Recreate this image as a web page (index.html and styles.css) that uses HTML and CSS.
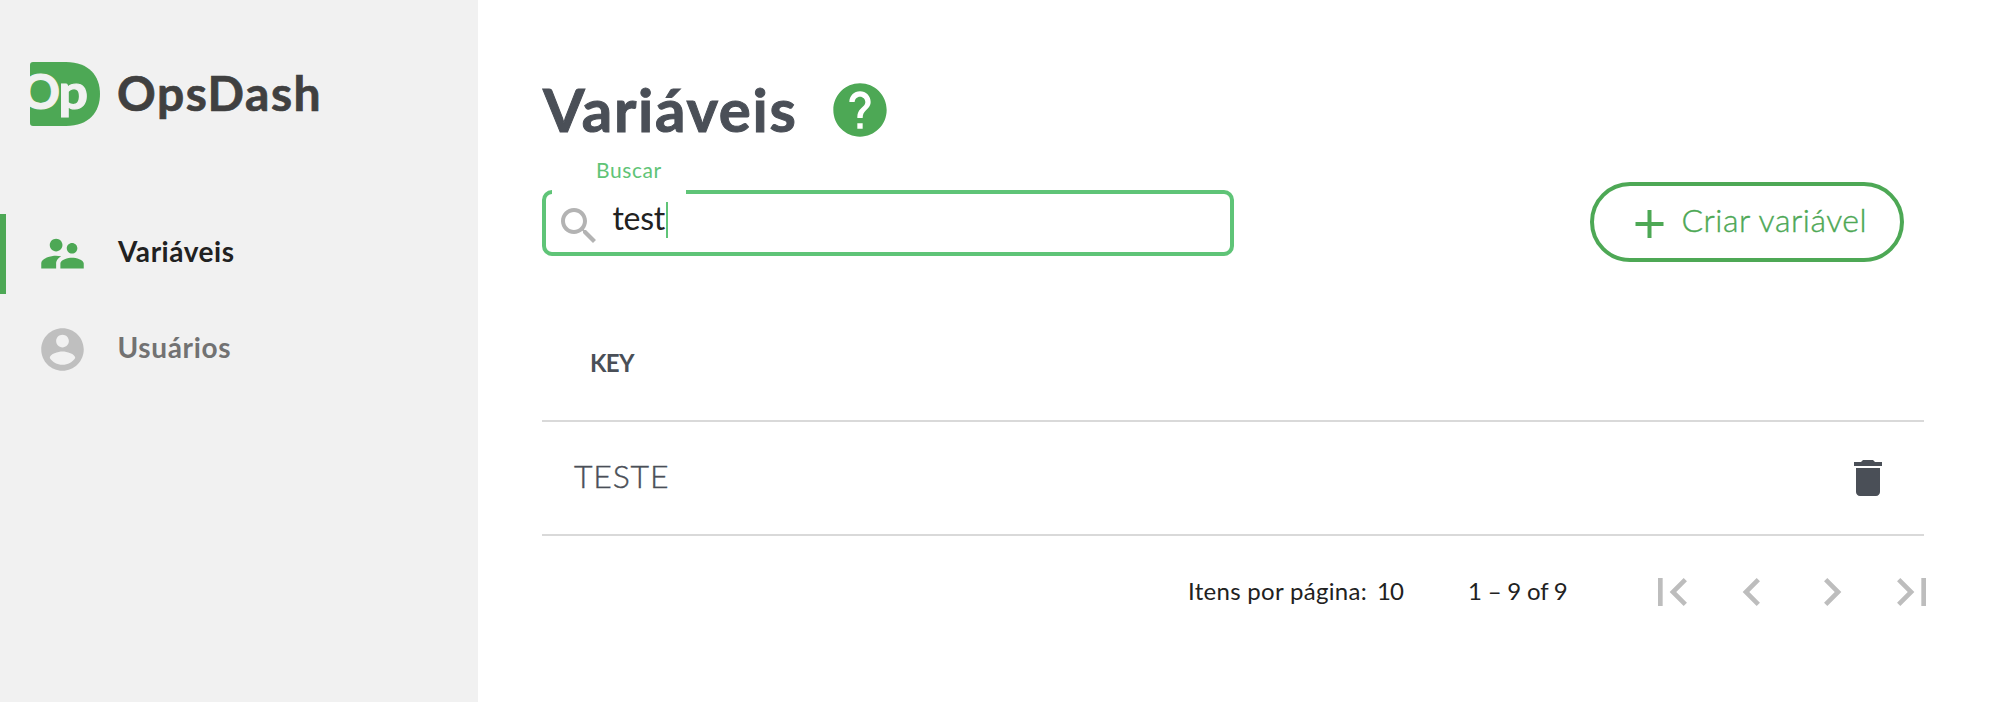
FILE: index.html
```html
<!DOCTYPE html>
<html lang="pt-BR">
<head>
<meta charset="utf-8">
<title>OpsDash</title>
<link rel="stylesheet" href="styles.css">
</head>
<body>
<div class="app">
  <aside class="sidebar">
    <div class="brand">
      <svg class="brand-mark" viewBox="0 0 70 64">
        <path class="brand-shape" d="M3 0H36C59 0 70 14 70 32S59 64 36 64H3Q0 64 0 61V3Q0 0 3 0Z"/>
        <text class="brand-letter" x="-8.8" y="47">O</text>
        <text class="brand-letter" x="28.5" y="47" textLength="29.5" lengthAdjust="spacingAndGlyphs">p</text>
      </svg>
      <span class="brand-name">OpsDash</span>
    </div>
    <nav class="menu">
      <a class="menu-item menu-item-active">
        <svg class="menu-icon" viewBox="0 0 24 24"><path d="M16.5 12c1.38 0 2.49-1.12 2.49-2.5S17.88 7 16.5 7C15.12 7 14 8.12 14 9.5s1.12 2.5 2.5 2.5zM9 11c1.66 0 2.99-1.34 2.99-3S10.66 5 9 5C7.34 5 6 6.34 6 8s1.34 3 3 3zm7.5 3c-1.83 0-5.5.92-5.5 2.75V19h11v-2.25c0-1.83-3.67-2.75-5.5-2.75zM9 13c-2.33 0-7 1.17-7 3.5V19h7v-2.25c0-.85.33-2.34 2.37-3.47C10.5 13.1 9.66 13 9 13z"/></svg>
        <span class="menu-label label-variables">Variáveis</span>
      </a>
      <a class="menu-item">
        <svg class="menu-icon" viewBox="0 0 24 24"><path d="M12 2C6.48 2 2 6.48 2 12s4.48 10 10 10 10-4.48 10-10S17.52 2 12 2zm0 3c1.66 0 3 1.34 3 3s-1.34 3-3 3-3-1.34-3-3 1.34-3 3-3zm0 14.2c-2.5 0-4.71-1.28-6-3.22.03-1.99 4-3.08 6-3.08 1.99 0 5.97 1.09 6 3.08-1.29 1.94-3.5 3.22-6 3.22z"/></svg>
        <span class="menu-label label-users">Usuários</span>
      </a>
    </nav>
  </aside>
  <main class="content">
    <header class="page-header">
      <h1 class="page-title">Variáveis</h1>
      <svg class="help-icon" viewBox="0 0 24 24"><path d="M12 2C6.48 2 2 6.48 2 12s4.48 10 10 10 10-4.48 10-10S17.52 2 12 2zm1 17h-2v-2h2v2zm2.07-7.75l-.9.92C13.45 12.9 13 13.5 13 15h-2v-.5c0-1.1.45-2.1 1.17-2.83l1.24-1.26c.37-.36.59-.86.59-1.41 0-1.1-.9-2-2-2s-2 .9-2 2H8c0-2.21 1.79-4 4-4s4 1.79 4 4c0 .88-.36 1.68-.93 2.25z"/></svg>
    </header>
    <div class="toolbar">
      <div class="search">
        <span class="search-label">Buscar</span>
        <svg class="search-icon" viewBox="0 0 24 24"><path d="M15.5 14h-.79l-.28-.27C15.41 12.59 16 11.11 16 9.5 16 5.91 13.09 3 9.5 3S3 5.91 3 9.5 5.91 16 9.5 16c1.61 0 3.09-.59 4.23-1.57l.27.28v.79l5 4.99L20.49 19l-4.99-5zm-6 0C7.01 14 5 11.99 5 9.5S7.01 5 9.5 5 14 7.01 14 9.5 11.99 14 9.5 14z"/></svg>
        <span class="search-value">test</span>
        <span class="caret"></span>
      </div>
      <button class="create-button">
        <svg class="create-icon" viewBox="0 0 24 24"><path d="M19 13h-6v6h-2v-6H5v-2h6V5h2v6h6v2z"/></svg>
        <span class="create-text">Criar variável</span>
      </button>
    </div>
    <section class="table">
      <div class="table-head"><span class="head-text">KEY</span></div>
      <div class="table-row">
        <span class="cell-text">TESTE</span>
        <svg class="delete-icon" viewBox="0 0 24 24"><path d="M6 19c0 1.1.9 2 2 2h8c1.1 0 2-.9 2-2V7H6v12zM19 4h-3.5l-1-1h-5l-1 1H5v2h14V4z"/></svg>
      </div>
    </section>
    <footer class="paginator">
      <span class="page-label">Itens por página:</span>
      <span class="page-size">10</span>
      <span class="page-range">1 – 9 of 9</span>
      <div class="page-nav">
        <svg class="nav-icon" viewBox="0 0 24 24"><path d="M18.41 16.59L13.82 12l4.59-4.59L17 6l-6 6 6 6zM6 6h2v12H6z"/></svg>
        <svg class="nav-icon" viewBox="0 0 24 24"><path d="M15.41 7.41L14 6l-6 6 6 6 1.41-1.41L10.83 12z"/></svg>
        <svg class="nav-icon" viewBox="0 0 24 24"><path d="M10 6L8.59 7.41 13.17 12l-4.58 4.59L10 18l6-6z"/></svg>
        <svg class="nav-icon" viewBox="0 0 24 24"><path d="M5.59 7.41L10.18 12l-4.59 4.59L7 18l6-6-6-6zM16 6h2v12h-2z"/></svg>
      </div>
    </footer>
  </main>
</div>
</body>
</html>
```

FILE: styles.css
```css
* { box-sizing: border-box; }
body {
  margin: 0;
  background: #fff;
  font-family: Lato, "Open Sans", sans-serif;
}
svg { display: block; flex: none; fill: currentColor; }
span { white-space: nowrap; }

.app { display: flex; height: 702px; overflow: hidden; }

/* Sidebar */
.sidebar { width: 478px; flex: none; background: #f1f1f1; }
.brand { display: flex; height: 214px; padding: 62px 0 0 30px; }
.brand-mark { width: 70px; height: 64px; overflow: visible; }
.brand-shape { fill: #4da855; }
.brand-letter {
  fill: #f1f1f1;
  stroke: #f1f1f1;
  stroke-width: 1.2px;
  font-size: 48px;
  font-weight: 700;
}
.brand-name {
  margin-left: 17px;
  padding-top: 1.5px;
  color: #404040;
  font-size: 48px;
  line-height: 58px;
  font-weight: 700;
  letter-spacing: 1.5px;
  -webkit-text-stroke: 0.7px #404040;
}
.menu { display: flex; flex-direction: column; gap: 16px; }
.menu-item {
  display: flex;
  align-items: center;
  height: 80px;
  padding-left: 36.5px;
  color: #727272;
  font-size: 28px;
  line-height: 34px;
  font-weight: 700;
}
.menu-item-active {
  padding-left: 30.5px;
  border-left: 6px solid #4da855;
  color: #212121;
}
.menu-icon { width: 51px; height: 51px; margin-top: -1px; color: #bfbfbf; }
.menu-item-active .menu-icon { color: #4da855; }
.menu-label { margin-top: -6px; }
.label-variables { margin-left: 30.5px; letter-spacing: 0.55px; }
.label-users { margin-left: 30px; letter-spacing: 0.65px; }

/* Main area */
.content { width: 1446px; padding: 73px 0 0 64px; flex: none; }
.page-header { display: flex; height: 109px; }
.page-title {
  width: 286px;
  margin: 0;
  padding-left: 1px;
  color: #4a4f57;
  font-size: 60px;
  line-height: 72px;
  font-weight: 700;
  letter-spacing: 1.7px;
  white-space: nowrap;
  -webkit-text-stroke: 1px #4a4f57;
}
.help-icon { width: 64px; height: 64px; margin-top: 5px; color: #4da855; }

.toolbar { display: flex; justify-content: space-between; height: 80px; padding-right: 20px; }
.search {
  position: relative;
  display: flex;
  width: 692px;
  height: 66px;
  margin-top: 8px;
  padding-left: 9px;
  border: 4px solid #5fc477;
  border-radius: 10px;
}
.search-label {
  position: absolute;
  left: 6px;
  top: -38px;
  width: 134px;
  height: 40px;
  padding-left: 44px;
  background: #fff;
  color: #5fc477;
  font-size: 21px;
  line-height: 28px;
  letter-spacing: 0.6px;
}
.search-icon { width: 48px; height: 48px; margin-top: 8px; color: #b3b3b3; }
.search-value {
  width: 55px;
  margin: 5px 0 0 9.5px;
  color: #212121;
  font-size: 32px;
  line-height: 38px;
  letter-spacing: -0.3px;
}
.caret { width: 2px; height: 36px; margin: 8px 0 0 -1.5px; background: #5fc477; }

.create-button {
  display: flex;
  align-items: center;
  width: 314px;
  height: 80px;
  padding: 0 0 0 31px;
  border: 4px solid #4da855;
  border-radius: 40px;
  background: #fff;
  color: #4da855;
  font: 300 32px/38px Lato, "Open Sans", sans-serif;
}
.create-icon { width: 49px; height: 48px; margin-top: 4px; }
.create-text { margin: -4px 0 0 7.5px; letter-spacing: 0.53px; -webkit-text-stroke: 0.4px #4da855; }

/* Table */
.table { color: #4a4f57; }
.table-head { height: 160px; padding: 87px 0 0 48px; border-bottom: 2px solid #d9d9d9; }
.head-text { display: block; font-size: 24px; line-height: 28px; font-weight: 700; letter-spacing: -0.6px; }
.table-row {
  display: flex;
  align-items: center;
  justify-content: space-between;
  height: 114px;
  padding: 0 32px;
  border-bottom: 2px solid #d9d9d9;
}
.cell-text {
  margin-top: -4px;
  font-size: 32px;
  line-height: 38px;
  font-weight: 300;
  letter-spacing: 0.8px;
  -webkit-text-stroke: 0.4px #4a4f57;
}
.delete-icon { width: 48px; height: 48px; }

/* Paginator */
.paginator {
  display: flex;
  width: 1398px;
  padding-top: 28px;
  justify-content: flex-end;
  color: #212121;
  font-size: 24px;
  line-height: 54px;
}
.page-label { width: 189px; letter-spacing: 0.3px; }
.page-size { width: 91px; letter-spacing: -1px; }
.page-range { width: 176px; letter-spacing: -0.2px; }
.page-nav { display: flex; gap: 24px; color: #bdbdbd; }
.nav-icon { width: 56px; height: 56px; }
```
